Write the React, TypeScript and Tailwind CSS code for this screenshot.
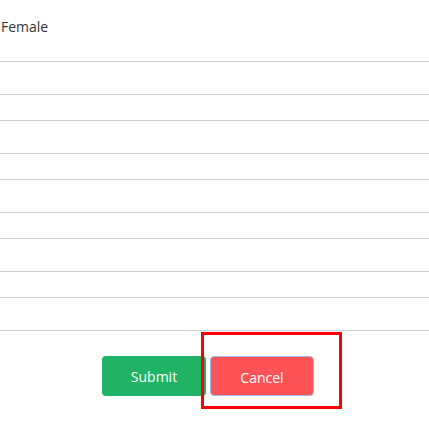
import React from 'react';

const rowHeights = ['h-[33px]', 'h-[26px]', 'h-[33px]', 'h-[26px]', 'h-[33px]', 'h-[26px]', 'h-[33px]', 'h-[26px]', 'h-[33px]'];

const App: React.FC = () => {
  return (
    <div className="w-[429px] h-[429px] bg-white overflow-hidden font-['Open_Sans',sans-serif] text-[14px] text-[#333]">
      <div className="h-[62px] border-b border-[#d0d0d0] pt-[16px] pl-[1px]">Female</div>
      {rowHeights.map((h, i) => (
        <div key={i} className={`${h} border-b border-[#d0d0d0]`} />
      ))}
      <div className="flex pl-[102px] pt-[25px] gap-[4px]">
        <button className="w-[104px] h-[40px] rounded-[4px] bg-[#20b366] text-white text-[14px]">
          Submit
        </button>
        <div className="relative">
          <button className="w-[104px] h-[40px] rounded-[4px] bg-[#fe5356] border border-[#9fb6f4] text-white text-[14px] pt-[2px]">
            Cancel
          </button>
          <div className="absolute left-[-9px] top-[-24px] w-[141px] h-[77px] border-[3px] border-[#ff0000] pointer-events-none" />
        </div>
      </div>
    </div>
  );
};

export default App;
